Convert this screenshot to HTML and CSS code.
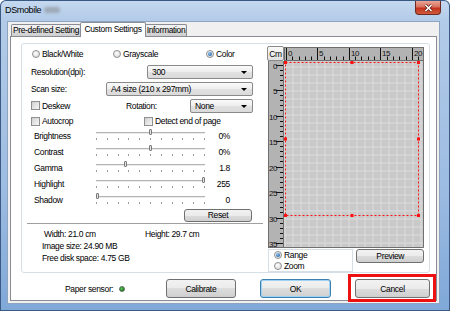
FILE: index.html
```html
<!DOCTYPE html>
<html lang="en">

<head>
    <meta charset="UTF-8" />
    <title>DSmobile</title>
    <link rel="stylesheet" href="styles.css">
</head>

<body>
    <div class="window">
        <div class="titlebar">
            <span class="title">DSmobile</span>
            <span class="title-hidden"></span>
            <div class="close-btn">
                <svg width="11" height="8" viewBox="0 0 11 8">
                    <path d="M2.5 1 L8.5 7 M8.5 1 L2.5 7" stroke="#5a1a12" stroke-width="3" />
                    <path d="M2.5 1 L8.5 7 M8.5 1 L2.5 7" stroke="#fff" stroke-width="1.6" />
                </svg>
            </div>
        </div>

        <div class="client">
            <div class="tabs">
                <div class="tab tab-pre">Pre-defined Setting</div>
                <div class="tab tab-custom active">Custom Settings</div>
                <div class="tab tab-info">Information</div>
            </div>

            <div class="panel">
                <div class="group">
                    <!-- scan settings -->
                    <div class="settings">
                        <div class="row row-radio">
                            <label class="opt opt-bw"><span class="radio"></span>Black/White</label>
                            <label class="opt opt-gray"><span class="radio"></span>Grayscale</label>
                            <label class="opt"><span class="radio checked"></span>Color</label>
                        </div>
                        <div class="row row-combo">
                            <span class="lbl lbl-res">Resolution(dpi):</span>
                            <div class="combo combo-res">300</div>
                        </div>
                        <div class="row row-combo">
                            <span class="lbl lbl-size">Scan size:</span>
                            <div class="combo combo-size">A4 size (210 x 297mm)</div>
                        </div>
                        <div class="row row-combo">
                            <label class="opt opt-deskew"><span class="check"></span>Deskew</label>
                            <span class="lbl lbl-rot">Rotation:</span>
                            <div class="combo combo-rot">None</div>
                        </div>
                        <div class="row row-check">
                            <label class="opt opt-autocrop"><span class="check"></span>Autocrop</label>
                            <label class="opt"><span class="check"></span>Detect end of page</label>
                        </div>

                        <div class="row row-slider">
                            <span class="slider-lbl">Brightness</span>
                            <div class="slider"><span class="thumb" style="left: 53px"></span></div>
                            <span class="slider-val">0%</span>
                        </div>
                        <div class="row row-slider">
                            <span class="slider-lbl">Contrast</span>
                            <div class="slider"><span class="thumb" style="left: 53px"></span></div>
                            <span class="slider-val">0%</span>
                        </div>
                        <div class="row row-slider">
                            <span class="slider-lbl">Gamma</span>
                            <div class="slider"><span class="thumb" style="left: 28px"></span></div>
                            <span class="slider-val">1.8</span>
                        </div>
                        <div class="row row-slider">
                            <span class="slider-lbl">Highlight</span>
                            <div class="slider"><span class="thumb" style="left: 106px"></span></div>
                            <span class="slider-val">255</span>
                        </div>
                        <div class="row row-slider">
                            <span class="slider-lbl">Shadow</span>
                            <div class="slider"><span class="thumb" style="left: 0px"></span></div>
                            <span class="slider-val">0</span>
                        </div>

                        <div class="row row-reset">
                            <button class="btn btn-reset">Reset</button>
                        </div>
                        <div class="separator"></div>

                        <div class="info">
                            <div class="info-row">
                                <span class="info-width">Width: 21.0 cm</span>
                                <span>Height: 29.7 cm</span>
                            </div>
                            <div class="info-row info-indent">Image size: 24.90 MB</div>
                            <div class="info-row info-indent">Free disk space: 4.75 GB</div>
                        </div>
                    </div>

                    <!-- preview area -->
                    <div class="preview">
                        <div class="preview-top">
                            <button class="btn-cm">Cm</button>
                            <svg id="rulerTop" class="ruler-top" width="140" height="15"></svg>
                        </div>
                        <div class="preview-body">
                            <svg id="rulerLeft" class="ruler-left" width="17" height="187"></svg>
                            <svg class="canvas" width="140" height="187">
                                <defs>
                                    <pattern id="grid" x="0.5" y="5.5" width="8" height="8" patternUnits="userSpaceOnUse">
                                        <rect width="8" height="8" fill="#c9c9c9" />
                                        <path d="M0.5 0 V8 M0 0.5 H8" stroke="#dcdcdc" stroke-width="1" />
                                    </pattern>
                                </defs>
                                <rect width="140" height="187" fill="url(#grid)" />
                                <rect x="1.5" y="1.5" width="133" height="153" fill="none" stroke="#ff1010"
                                    stroke-width="1" stroke-dasharray="2 2" />
                                <g fill="#ff1010">
                                    <rect x="0" y="0" width="3" height="3" />
                                    <rect x="66.5" y="0" width="3" height="3" />
                                    <rect x="133" y="0" width="3" height="3" />
                                    <rect x="0" y="76.5" width="3" height="3" />
                                    <rect x="133" y="76.5" width="3" height="3" />
                                    <rect x="0" y="153" width="3" height="3" />
                                    <rect x="66.5" y="153" width="3" height="3" />
                                    <rect x="133" y="153" width="3" height="3" />
                                </g>
                                <path d="M139.5 0 V186.5 H0" fill="none" stroke="#707070" />
                            </svg>
                        </div>
                        <div class="preview-bottom">
                            <div class="mode-box">
                                <label class="opt mode-opt"><span class="radio checked"></span>Range</label>
                                <label class="opt mode-opt"><span class="radio"></span>Zoom</label>
                            </div>
                            <button class="btn btn-preview">Preview</button>
                        </div>
                    </div>
                </div>

                <div class="footer">
                    <div class="sensor">
                        <span>Paper sensor:</span>
                        <span class="led"></span>
                    </div>
                    <button class="btn btn-calibrate">Calibrate</button>
                    <button class="btn btn-ok">OK</button>
                    <span class="highlight">
                        <button class="btn btn-cancel">Cancel</button>
                    </span>
                </div>
            </div>
        </div>
    </div>

    <script>
        (function () {
            const ns = 'http://www.w3.org/2000/svg';
            const rulerTop = document.getElementById('rulerTop');
            const rulerLeft = document.getElementById('rulerLeft');

            function add(svg, tag, attrs, text) {
                const el = document.createElementNS(ns, tag);
                for (const key in attrs) {
                    el.setAttribute(key, attrs[key]);
                }
                if (text !== undefined) el.textContent = text;
                svg.appendChild(el);
                return el;
            }

            // ruler backgrounds
            add(rulerTop, 'rect', { x: 0.5, y: 1.5, width: 139, height: 13, fill: '#b3b3b3', stroke: '#6e6e6e' });
            add(rulerLeft, 'rect', { x: 1.5, y: -1, width: 15, height: 187.5, fill: '#b3b3b3', stroke: '#6e6e6e' });

            // horizontal scale: 6.29px per cm
            for (let c = 0; c <= 21; c++) {
                const x = Math.round(2 + c * 6.29) + 0.5;
                if (c % 5 === 0) {
                    add(rulerTop, 'line', { x1: x, y1: 2, x2: x, y2: 14, stroke: '#111' });
                    add(rulerTop, 'text', { x: x + 1.5, y: 10, class: 'ruler-num' }, c);
                } else {
                    add(rulerTop, 'line', { x1: x, y1: 10.5, x2: x, y2: 14, stroke: '#111' });
                }
            }

            // vertical scale: 5.1px per cm
            for (let c = 0; c <= 35; c++) {
                const y = Math.round(3.5 + c * 5.1) + 0.5;
                if (c % 5 === 0) {
                    add(rulerLeft, 'line', { x1: 9, y1: y, x2: 16, y2: y, stroke: '#111' });
                    add(rulerLeft, 'text', { x: 10, y: y + 3, class: 'ruler-num', 'text-anchor': 'end' }, c);
                } else {
                    add(rulerLeft, 'line', { x1: 13, y1: y, x2: 16, y2: y, stroke: '#111' });
                }
            }
        })();
    </script>
</body>

</html>
```

FILE: styles.css
```css
* {
    box-sizing: border-box;
}

body {
    margin: 0;
    width: 450px;
    height: 311px;
    overflow: hidden;
    font-family: "Liberation Sans", Arial, sans-serif;
    font-size: 8.5px;
    letter-spacing: -0.35px;
    white-space: nowrap;
    color: #000;
}

.window {
    width: 450px;
    height: 311px;
    display: flex;
    flex-direction: column;
    border-radius: 6px 6px 0 0;
    background: linear-gradient(180deg, #c6daf0 0, #b2cbe8 20px, #9dbce2 60%, #7fa8d8 100%);
    box-shadow: inset 0 0 0 1px #3a5a84;
}

/* title bar */
.titlebar {
    height: 21px;
    display: flex;
    align-items: flex-start;
    padding-left: 5px;
    flex-shrink: 0;
}

.title {
    margin-top: 5px;
    line-height: 10px;
    font-size: 9px;
}

.title-hidden {
    width: 16px;
    height: 6px;
    margin: 7px 0 0 3px;
    background: #9ea8b6;
    border-radius: 3px;
    filter: blur(1.5px);
}

.close-btn {
    margin-left: auto;
    margin-right: 9px;
    margin-top: 1px;
    width: 26px;
    height: 14px;
    display: flex;
    align-items: center;
    justify-content: center;
    border: 1px solid #6e2a22;
    border-top: none;
    border-radius: 0 0 4px 4px;
    background: linear-gradient(180deg, #e9a597 0, #d9725f 45%, #c4321e 55%, #cf5a3c 100%);
}

/* client area */
.client {
    margin-left: 7px;
    width: 433px;
    height: 283px;
    flex-shrink: 0;
    border: 1px solid #8ea4c0;
    background: #f0f0f0;
    padding: 0 2px 2px 2px;
    display: flex;
    flex-direction: column;
}

.tabs {
    height: 14px;
    display: flex;
    align-items: flex-end;
    padding-left: 1px;
    flex-shrink: 0;
}

.tab {
    height: 12px;
    line-height: 11px;
    text-align: center;
    border: 1px solid #898c95;
    border-bottom: none;
    border-radius: 2px 2px 0 0;
    background: linear-gradient(180deg, #f2f2f2 0, #ebebeb 50%, #dddddd 50%, #cfcfcf 100%);
}

.tab-pre {
    width: 70px;
}

.tab-custom {
    width: 66px;
    margin-left: -1px;
}

.tab-info {
    width: 42px;
    margin-left: -1px;
}

.tab.active {
    height: 15px;
    margin-bottom: -1px;
    background: #fff;
    position: relative;
    z-index: 1;
    line-height: 12px;
}

.panel {
    flex: 1;
    border: 1px solid #898c95;
    background: #fff;
    padding: 6px 0 0 10px;
    display: flex;
    flex-direction: column;
}

.group {
    width: 409px;
    height: 230px;
    border: 1px solid #d5dfe5;
    border-radius: 3px;
    display: flex;
}

/* settings column */
.settings {
    width: 245px;
    padding-left: 9px;
    display: flex;
    flex-direction: column;
}

.row {
    display: flex;
    align-items: center;
}

.row-radio {
    height: 19px;
}

.row-combo {
    height: 17px;
}

.row-check {
    height: 14px;
}

.row-slider {
    height: 16px;
}

.row-reset {
    height: 15px;
    align-items: flex-start;
    padding-top: 1px;
}

.opt {
    display: flex;
    align-items: center;
    gap: 2px;
}

.opt-bw {
    width: 82px;
    padding-left: 1px;
}

.opt-gray {
    width: 93px;
}

.radio {
    width: 8px;
    height: 8px;
    flex-shrink: 0;
    border-radius: 50%;
    border: 1px solid #8e8f8f;
    background: radial-gradient(circle at 40% 35%, #fdfdfd 0, #e2e2e2 70%);
    display: inline-block;
    position: relative;
}

.radio.checked::after {
    content: "";
    position: absolute;
    left: 1px;
    top: 1px;
    width: 4px;
    height: 4px;
    border-radius: 50%;
    background: radial-gradient(circle at 40% 35%, #8cc4f0 0, #1f5fa8 80%);
}

.check {
    width: 9px;
    height: 9px;
    flex-shrink: 0;
    border: 1px solid #8e8f8f;
    background: linear-gradient(135deg, #cfcfcf 0, #e8e8e8 60%, #f4f4f4 100%);
    display: inline-block;
}

.lbl-res {
    width: 116px;
}

.lbl-size {
    width: 75px;
}

.opt-deskew {
    width: 95px;
}

.lbl-rot {
    width: 64px;
}

.opt-autocrop {
    width: 113px;
}

.combo {
    height: 14px;
    line-height: 12px;
    padding-left: 4px;
    border: 1px solid #8a8a8a;
    border-radius: 2px;
    background: linear-gradient(180deg, #fafafa 0, #ededed 50%, #e2e2e2 50%, #dadada 100%);
    position: relative;
}

.combo::after {
    content: "";
    position: absolute;
    right: 5px;
    top: 5px;
    border-left: 3px solid transparent;
    border-right: 3px solid transparent;
    border-top: 3px solid #000;
}

.combo-res {
    width: 106px;
}

.combo-size {
    width: 147px;
}

.combo-rot {
    width: 63px;
}

/* sliders */
.slider-lbl {
    width: 65px;
    padding-left: 3px;
}

.slider {
    width: 109px;
    height: 16px;
    position: relative;
}

.slider::before {
    content: "";
    position: absolute;
    left: 0;
    right: 0;
    top: 4px;
    height: 1px;
    background: #b4b4b4;
    box-shadow: 0 1px 0 #ececec;
}

.slider::after {
    content: "";
    position: absolute;
    left: 0;
    right: 0;
    top: 10px;
    height: 2px;
    background: repeating-linear-gradient(90deg, #9a9a9a 0 1px, transparent 1px 10.8px);
}

.thumb {
    position: absolute;
    top: 1px;
    width: 3px;
    height: 6px;
    border: 1px solid #7a7a7a;
    border-radius: 1px;
    background: #e6e6e6;
    z-index: 1;
}

.slider-val {
    width: 25px;
    text-align: right;
}

.btn {
    font-family: inherit;
    font-size: 8.5px;
    letter-spacing: -0.35px;
    color: #000;
    padding: 0;
    border: 1px solid #707070;
    border-radius: 3px;
    background: linear-gradient(180deg, #f2f2f2 0, #ebebeb 50%, #dddddd 50%, #cfcfcf 100%);
}

.btn-reset {
    margin-left: 153px;
    width: 68px;
    height: 13px;
    line-height: 11px;
}

.separator {
    margin-left: -4px;
    width: 236px;
    height: 2px;
    border-top: 1px solid #a0a0a0;
    border-bottom: 1px solid #fff;
    flex-shrink: 0;
}

.info {
    padding-top: 3px;
}

.info-row {
    height: 12px;
    line-height: 12px;
    display: flex;
}

.info-width {
    margin-left: 13px;
    width: 101px;
}

.info-indent {
    padding-left: 11px;
}

/* preview column */
.preview {
    width: 157px;
    padding-top: 2px;
    display: flex;
    flex-direction: column;
}

.preview-top {
    height: 15px;
    display: flex;
}

.btn-cm {
    width: 17px;
    height: 15px;
    padding: 0;
    font-family: inherit;
    font-size: 8.5px;
    letter-spacing: -0.3px;
    border: 1px solid #8a8a8a;
    border-radius: 2px;
    background: linear-gradient(180deg, #fbfbfb 0, #ececec 50%, #e0e0e0 100%);
}

.preview-body {
    height: 187px;
    display: flex;
}

.ruler-top,
.ruler-left,
.canvas {
    display: block;
}

.ruler-num {
    font-family: "Liberation Sans", Arial, sans-serif;
    font-size: 8px;
    letter-spacing: -0.4px;
    fill: #111;
}

.preview-bottom {
    margin-top: 1px;
    height: 23px;
    display: flex;
    align-items: flex-start;
    gap: 3px;
}

.mode-box {
    margin-left: 1px;
    width: 86px;
    height: 23px;
    border: 1px solid #d5dfe5;
    padding-left: 5px;
    display: flex;
    flex-direction: column;
}

.mode-opt {
    height: 10.5px;
}

.btn-preview {
    width: 68px;
    height: 14px;
    line-height: 12px;
}

/* footer */
.footer {
    height: 27px;
    display: flex;
    align-items: flex-start;
    padding-top: 6px;
    padding-left: 44px;
}

.sensor {
    width: 105px;
    height: 19px;
    display: flex;
    align-items: center;
}

.led {
    margin-left: 6px;
    width: 6px;
    height: 6px;
    border-radius: 50%;
    border: 1px solid #5a6e5a;
    background: radial-gradient(circle at 40% 40%, #5fcf5f 0, #1e7a1e 70%);
}

.btn-calibrate {
    width: 73px;
    height: 19px;
}

.btn-ok {
    margin-left: 24px;
    width: 74px;
    height: 19px;
    border-color: #3c7fb1;
    box-shadow: inset 0 0 0 1px #9fd2f4;
}

.highlight {
    margin-left: 17px;
    margin-top: -5px;
    width: 88px;
    height: 28px;
    padding: 2px 3px 1px 4px;
    border: 3px solid #ee1111;
    display: flex;
}

.btn-cancel {
    width: 75px;
    height: 19px;
}
```
